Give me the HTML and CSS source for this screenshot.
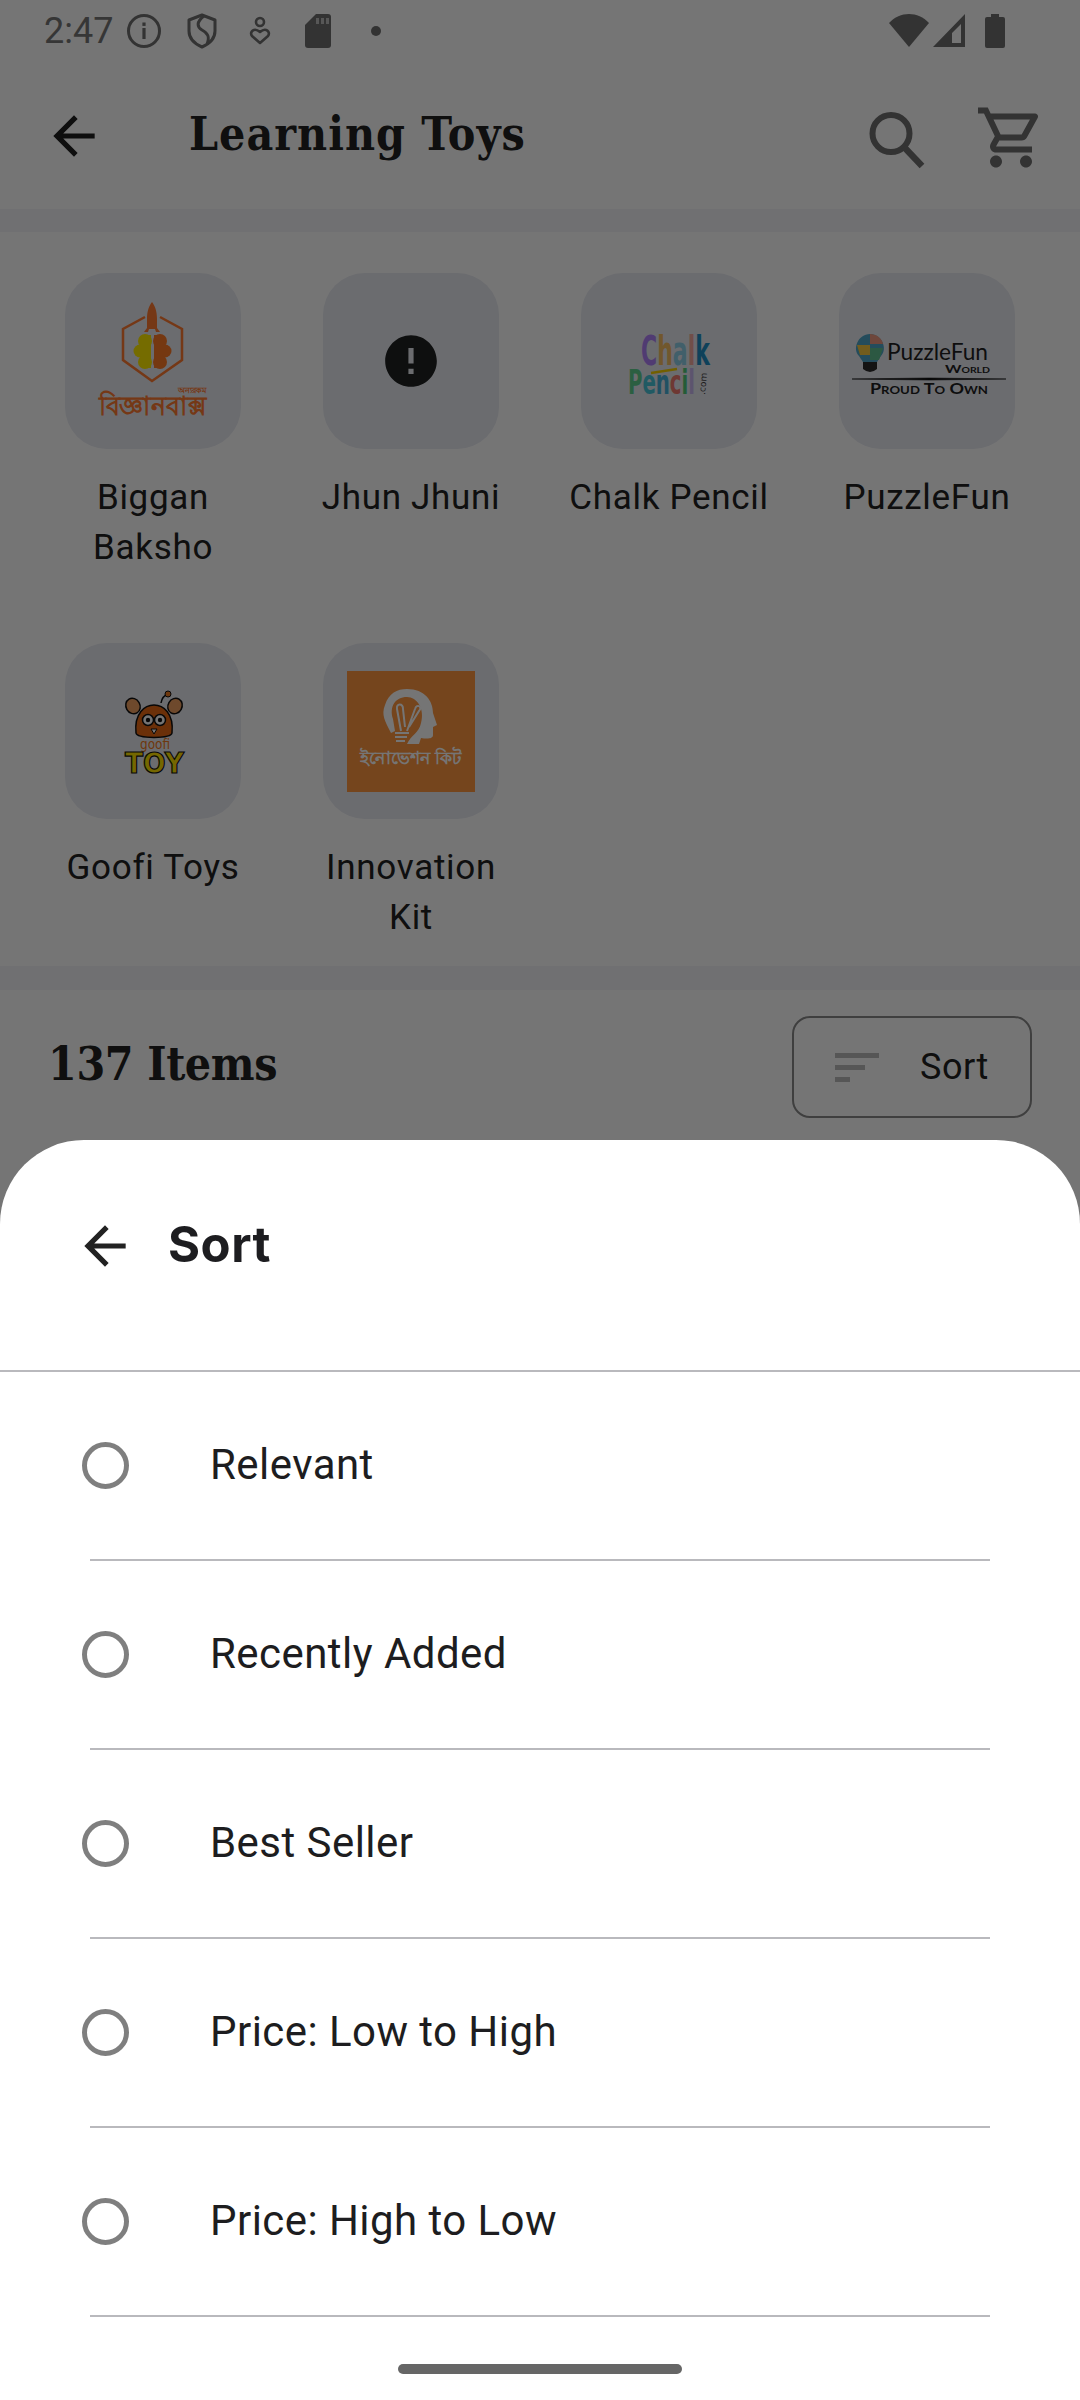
FILE: index.html
```html
<!DOCTYPE html>
<html lang="en">
<head>
  <meta charset="UTF-8" />
  <meta name="viewport" content="width=device-width, initial-scale=1.0"/>
  <title>Learning Toys</title>
  <link rel="stylesheet" href="styles.css">
</head>
<body>
  <div class="page">
    <div class="status-bar">
      <span class="time">2:47</span>
      <span class="slot">
        <svg width="36" height="36" viewBox="0 0 36 36"><circle cx="18" cy="18" r="15.5" fill="none" stroke="#6f6f6f" stroke-width="3"/><rect x="16.4" y="15" width="3.2" height="11" fill="#6f6f6f"/><rect x="16.4" y="9.500" width="3.200" height="3.400" fill="#6f6f6f"/></svg>
      </span>
      <span class="slot">
        <svg width="30" height="36" viewBox="0 0 30 36"><path d="M15 2 L28 7 V18 C28 26 22 31 15 34 C8 31 2 26 2 18 V7 Z" fill="none" stroke="#6f6f6f" stroke-width="3" stroke-linejoin="round"/><path d="M17 3 C9 9 10 14 15 17 C21 20 23 24 20 31" fill="none" stroke="#6f6f6f" stroke-width="3"/></svg>
      </span>
      <span class="slot">
        <svg width="22" height="30" viewBox="0 0 22 30"><circle cx="11" cy="6" r="4" fill="none" stroke="#6f6f6f" stroke-width="2.600"/><path d="M11 27 L3 20 C0 16 5 11 11 16 C17 11 22 16 19 20 Z" fill="none" stroke="#6f6f6f" stroke-width="2.600" stroke-linejoin="round"/></svg>
      </span>
      <span class="slot">
        <svg width="26" height="34" viewBox="0 0 26 34"><path d="M11 0 H23 Q26 0 26 3 V31 Q26 34 23 34 H3 Q0 34 0 31 V11 Z" fill="#6f6f6f"/><rect x="11" y="4" width="3" height="6" fill="#fff" opacity=".55"/><rect x="16" y="4" width="3" height="6" fill="#fff" opacity=".55"/><rect x="21" y="4" width="3" height="6" fill="#fff" opacity=".55"/></svg>
      </span>
      <span class="slot"><span class="dot"></span></span>
      <span class="status-right">
        <svg width="40" height="33" viewBox="0 0 40 33"><path d="M20 33 L0 9 C11 -3 29 -3 40 9 Z" fill="#6f6f6f"/></svg>
        <svg width="33" height="33" viewBox="0 0 33 33"><path fill-rule="evenodd" d="M0 33 L32 0 V33 Z M19 29 H28 V10 L19 19 Z" fill="#6f6f6f"/></svg>
        <svg class="battery" width="20" height="34" viewBox="0 0 20 34"><path d="M6 0 H14 V3 H18 Q20 3 20 5 V32 Q20 34 18 34 H2 Q0 34 0 32 V5 Q0 3 2 3 H6 Z" fill="#6f6f6f"/></svg>
      </span>
    </div>

    <div class="app-bar">
      <svg class="back" width="62" height="62" viewBox="0 0 24 24"><path d="M20 11H7.830l5.590-5.590L12 4l-8 8 8 8 1.410-1.410L7.830 13H20v-2z" fill="#1f1f1f"/></svg>
      <h1 class="page-title">Learning Toys</h1>
      <div class="app-actions">
        <svg width="72" height="72" viewBox="0 0 72 72"><circle cx="36" cy="33.500" r="18.500" fill="none" stroke="#6f6f6f" stroke-width="6"/><path d="M49 47 L67 66" stroke="#6f6f6f" stroke-width="6.500"/></svg>
        <svg width="72" height="72" viewBox="0 -0.500 24 24"><path d="M15.550 13c.750 0 1.410-.410 1.750-1.030l3.580-6.490c.370-.660-.110-1.480-.870-1.480H5.210l-.940-2H1v2h2l3.600 7.590-1.350 2.440C4.520 15.370 5.480 17 7 17h12v-2H7l1.100-2h7.450zM6.160 6h12.150l-2.760 5H8.530L6.160 6zM7 18c-1.100 0-1.990.900-1.990 2S5.900 22 7 22s2-.900 2-2-.900-2-2-2zm10 0c-1.100 0-1.990.900-1.990 2s.890 2 1.990 2 2-.900 2-2-.900-2-2-2z" fill="#6f6f6f"/></svg>
      </div>
    </div>

    <div class="band band-top"></div>

    <div class="brand-grid">
      <div class="brand">
        <div class="tile">
          <svg width="176" height="176" viewBox="0 0 176 176">
            <path d="M80 44 L58 56 V87 L87 108 L117 87 V56 L95 44" fill="none" stroke="#ff7a30" stroke-width="2.500"/>
            <path d="M87 29 C90 33 92 38 92 46 V55 L95 59 H91 L90 56 H84 L83 59 H79 L82 55 V46 C82 38 84 33 87 29 Z" fill="#ff7a30"/>
            <g fill="#ffeb00">
              <circle cx="80" cy="68" r="7"/>
              <circle cx="75" cy="78" r="6.500"/>
              <circle cx="80" cy="89" r="7"/>
              <rect x="78" y="62" width="8" height="33"/>
            </g>
            <g fill="#ff7a26">
              <circle cx="95" cy="68" r="7"/>
              <circle cx="100" cy="78" r="6.500"/>
              <circle cx="95" cy="89" r="7"/>
              <rect x="89" y="62" width="8" height="33"/>
            </g>
            <text class="logo-bn" x="141" y="120" text-anchor="end" font-size="8" font-weight="700" fill="#ff7a30">অন্যরকম</text>
            <text class="logo-bn" x="34" y="142" font-size="26" font-weight="700" fill="#ff7a30" textLength="107" lengthAdjust="spacingAndGlyphs">বিজ্ঞানবাক্স</text>
          </svg>
        </div>
        <span class="brand-name">Biggan<br>Baksho</span>
      </div>
      <div class="brand">
        <div class="tile">
          <svg width="62" height="62" viewBox="0 0 24 24"><path fill-rule="evenodd" d="M12 2C6.480 2 2 6.480 2 12s4.480 10 10 10 10-4.480 10-10S17.520 2 12 2zm1 15h-2v-2h2v2zm0-4h-2V7h2v6z" fill="#1f2222"/></svg>
        </div>
        <span class="brand-name">Jhun Jhuni</span>
      </div>
      <div class="brand">
        <div class="tile">
          <svg width="176" height="176" viewBox="0 0 176 176" font-family="DejaVu Sans" font-weight="700">
            <text font-size="40" transform="translate(60 92) scale(.55 1)"><tspan fill="#ae82f8">C</tspan><tspan fill="#f6be62">h</tspan><tspan fill="#8fd0e6">a</tspan><tspan fill="#f4aaa0">l</tspan><tspan fill="#1f8fc4">k</tspan></text>
            <text font-size="34" transform="translate(47 121) scale(.58 1)"><tspan fill="#5fcf8f">P</tspan><tspan fill="#48c4d8">e</tspan><tspan fill="#48b0d8">n</tspan><tspan fill="#f07a70">c</tspan><tspan fill="#50c878">i</tspan><tspan fill="#c9b8f0">l</tspan></text>
            <text font-size="9" font-weight="400" fill="#444" transform="translate(124 122) rotate(-85)">.com</text>
            <path d="M70 100 L96 96" stroke="#f8d000" stroke-width="2.500"/>
          </svg>
        </div>
        <span class="brand-name">Chalk Pencil</span>
      </div>
      <div class="brand">
        <div class="tile">
          <svg width="176" height="176" viewBox="0 0 176 176" font-family="Lato">
            <path d="M20 83 C13 76 19 61 31 61 C43 61 49 76 42 83 L38 89 H24 Z" fill="#4fa7c8"/>
            <path d="M31 61 C37 61 43 65 44 71 H31 Z" fill="#f09a80"/>
            <path d="M18 72 H31 V82 H21 Z" fill="#f8c840"/>
            <path d="M31 75 H44 L40 87 H31 Z" fill="#60c090"/>
            <path d="M24 89 H38 V96 Q31 102 24 96 Z" fill="#2a2a2a"/>
            <text x="48" y="87" font-size="22.500" fill="#1f1f1f" textLength="101" lengthAdjust="spacingAndGlyphs">PuzzleFun</text>
            <text class="small-caps" x="106" y="100" font-size="12" font-weight="700" fill="#1f1f1f" textLength="45" lengthAdjust="spacingAndGlyphs">World</text>
            <path d="M13 106 L90 105 L167 106 L90 107 Z" fill="#111" stroke="#111" stroke-width=".6"/>
            <text class="small-caps" x="31" y="121" font-size="15" font-weight="700" fill="#1f1f1f" textLength="118" lengthAdjust="spacingAndGlyphs">Proud To Own</text>
          </svg>
        </div>
        <span class="brand-name">PuzzleFun</span>
      </div>
      <div class="brand">
        <div class="tile">
          <svg width="176" height="176" viewBox="0 0 176 176" font-family="DejaVu Sans" font-weight="700">
            <path d="M96 60 C97 54 100 52 103 51" fill="none" stroke="#111" stroke-width="1.500"/>
            <circle cx="103" cy="51" r="3" fill="#f07a20" stroke="#111"/>
            <ellipse cx="68" cy="63" rx="7" ry="8" fill="#f0a060" stroke="#111" stroke-width="1.500" transform="rotate(-30 68 63)"/>
            <ellipse cx="110" cy="63" rx="7" ry="8" fill="#f0a060" stroke="#111" stroke-width="1.500" transform="rotate(30 110 63)"/>
            <path d="M71 90 C69 70 80 62 89 62 C98 62 109 70 107 90 C106 96 72 96 71 90 Z" fill="#ea6a14" stroke="#111" stroke-width="1.500"/>
            <circle cx="83" cy="77" r="5.500" fill="#fff" stroke="#111" stroke-width="1.500"/>
            <circle cx="95" cy="77" r="5.500" fill="#fff" stroke="#111" stroke-width="1.500"/>
            <circle cx="83" cy="77" r="2.200" fill="#111"/>
            <circle cx="95" cy="77" r="2.200" fill="#111"/>
            <path d="M86 86 H92 L89 91 Z" fill="#fff" stroke="#111"/>
            <text x="75" y="106" font-size="14" font-weight="400" fill="#f07a20" textLength="30" lengthAdjust="spacingAndGlyphs">goofi</text>
            <text x="60" y="130" font-size="28" fill="#ffe000" stroke="#111" stroke-width="1.200" textLength="59" lengthAdjust="spacingAndGlyphs">TOY</text>
          </svg>
        </div>
        <span class="brand-name">Goofi Toys</span>
      </div>
      <div class="brand">
        <div class="tile">
          <svg width="176" height="176" viewBox="0 0 176 176">
            <rect x="24" y="28" width="128" height="121" fill="#fe963f"/>
            <path fill-rule="evenodd" d="M84 46 C102 46 110 58 110 70 L114 82 L110 84 V92 C110 96 104 96 98 95 L96 101 H84 C88 92 96 90 98 80 C102 66 94 54 84 54 C72 54 66 64 70 76 L72 88 L68 90 C62 78 58 72 62 62 C66 50 74 46 84 46 Z" fill="#fff"/>
            <path d="M78 88 L74 66 C73 60 80 60 80 66 L82 84 M84 88 L92 66 C94 60 100 64 96 68 L86 84" fill="none" stroke="#fff" stroke-width="2"/>
            <path d="M72 90 H86 M72 94 H84 M73 98 H82" stroke="#fff" stroke-width="2"/>
            <text class="logo-bn" x="37" y="121" font-size="18" font-weight="700" fill="#fff" textLength="102" lengthAdjust="spacingAndGlyphs">ইনোভেশন কিট</text>
          </svg>
        </div>
        <span class="brand-name">Innovation<br>Kit</span>
      </div>
    </div>

    <div class="band"></div>

    <div class="items-row">
      <span class="items-count">137 Items</span>
      <div class="sort-btn">
        <span class="sort-bars">
          <span class="bar bar-lg"></span>
          <span class="bar bar-md"></span>
          <span class="bar bar-sm"></span>
        </span>
        <span class="sort-label">Sort</span>
      </div>
    </div>
  </div>

  <div class="scrim"></div>

  <div class="sheet">
    <div class="sheet-head">
      <svg width="62" height="62" viewBox="0 0 24 24"><path d="M20 11H7.830l5.590-5.590L12 4l-8 8 8 8 1.410-1.410L7.830 13H20v-2z" fill="#222"/></svg>
      <h2 class="sheet-title">Sort</h2>
    </div>
    <div class="sort-row"><span class="radio"></span><span class="sort-option">Relevant</span></div>
    <div class="sort-row"><span class="radio"></span><span class="sort-option">Recently Added</span></div>
    <div class="sort-row"><span class="radio"></span><span class="sort-option">Best Seller</span></div>
    <div class="sort-row"><span class="radio"></span><span class="sort-option">Price: Low to High</span></div>
    <div class="sort-row"><span class="radio"></span><span class="sort-option">Price: High to Low</span></div>
    <div class="nav-pill"></div>
  </div>
</body>
</html>
```

FILE: styles.css
```css
* {
  box-sizing: border-box;
}
body {
  margin: 0;
  width: 1080px;
  height: 2400px;
  overflow: hidden;
  position: relative;
  background: #fff;
  font-family: Roboto, sans-serif;
  color: #222;
}
h1, h2 {
  margin: 0;
}
svg {
  display: block;
  flex-shrink: 0;
}

/* status bar */
.status-bar {
  height: 62px;
  display: flex;
  align-items: center;
  padding-left: 44px;
}
.time {
  width: 71px;
  font-size: 36px;
  color: #777;
}
.slot {
  width: 58px;
  display: flex;
  justify-content: center;
}
.dot {
  width: 10px;
  height: 10px;
  border-radius: 50%;
  background: #6f6f6f;
}
.status-right {
  margin-left: auto;
  padding-right: 75px;
  display: flex;
  gap: 4px;
}
.battery {
  margin-left: 15px;
}

/* app bar */
.app-bar {
  height: 147px;
  display: flex;
  align-items: center;
  padding: 0 33px 0 43px;
}
.page-title {
  margin-left: 84px;
  padding-bottom: 4px;
  font-family: "DejaVu Serif Condensed", "DejaVu Serif", serif;
  font-size: 46px;
  font-weight: 700;
  letter-spacing: 1px;
  color: #222;
}
.app-actions {
  margin-left: auto;
  display: flex;
  gap: 48px;
}
.band {
  height: 24px;
  background: #f3f3f8;
}
.band-top {
  height: 23px;
}

/* brands */
.brand-grid {
  height: 734px;
  padding: 41px 24px 0;
  display: grid;
  grid-template-columns: repeat(4, 258px);
  grid-auto-rows: 323px;
  row-gap: 47px;
}
.brand {
  display: flex;
  flex-direction: column;
  align-items: center;
}
.tile {
  width: 176px;
  height: 176px;
  border-radius: 42px;
  background: #e9ebf2;
  display: flex;
  align-items: center;
  justify-content: center;
}
.brand-name {
  margin-top: 24px;
  font-size: 35px;
  line-height: 50px;
  letter-spacing: .7px;
  text-align: center;
}
.logo-bn {
  font-family: "Noto Sans", sans-serif;
}
.small-caps {
  font-variant: small-caps;
}

/* items row */
.items-row {
  display: flex;
  justify-content: space-between;
  align-items: center;
  padding: 26px 48px 0;
}
.items-count {
  padding-bottom: 7px;
  font-family: "DejaVu Serif Condensed", "DejaVu Serif", serif;
  font-size: 46px;
  font-weight: 700;
  letter-spacing: -.4px;
}
.sort-btn {
  width: 240px;
  height: 102px;
  border: 2px solid #8a8a8a;
  border-radius: 18px;
  display: flex;
  align-items: center;
  padding-left: 41px;
}
.sort-bars {
  display: flex;
  flex-direction: column;
  gap: 7px;
}
.bar {
  display: block;
  height: 5px;
  background: #bcbcbc;
}
.bar-lg { width: 44px; }
.bar-md { width: 30px; }
.bar-sm { width: 15px; }
.sort-label {
  margin-left: 41px;
  font-size: 36px;
  letter-spacing: .5px;
}

/* scrim + bottom sheet */
.page {
  width: 100%;
  height: 100%;
}
.scrim {
  position: absolute;
  inset: 0;
  background: rgba(0,0,0,0.54);
}
.sheet {
  position: absolute;
  top: 1140px;
  left: 0;
  right: 0;
  bottom: 0;
  background: #fff;
  border-radius: 84px 84px 0 0;
}
.sheet-head {
  height: 232px;
  padding: 75px 0 0 74px;
  border-bottom: 2px solid #b9b9bd;
  display: flex;
  align-items: flex-start;
}
.sheet-title {
  margin: -1px 0 0 32px;
  font-family: Inter, sans-serif;
  font-size: 49px;
  font-weight: 700;
  letter-spacing: .5px;
  line-height: 62px;
  color: #1d1d20;
}
.sort-row {
  height: 189px;
  margin: 0 90px;
  border-bottom: 2px solid #b9b9bd;
  display: flex;
  align-items: center;
}
.radio {
  width: 47px;
  height: 47px;
  margin-left: -8px;
  border: 5px solid #7f7f7f;
  border-radius: 50%;
}
.sort-option {
  margin-left: 81px;
  padding-bottom: 3px;
  font-size: 42px;
  letter-spacing: .45px;
  color: #1d1d20;
}
.nav-pill {
  position: absolute;
  left: 398px;
  top: 1224px;
  width: 284px;
  height: 10px;
  border-radius: 5px;
  background: #666;
}
```
